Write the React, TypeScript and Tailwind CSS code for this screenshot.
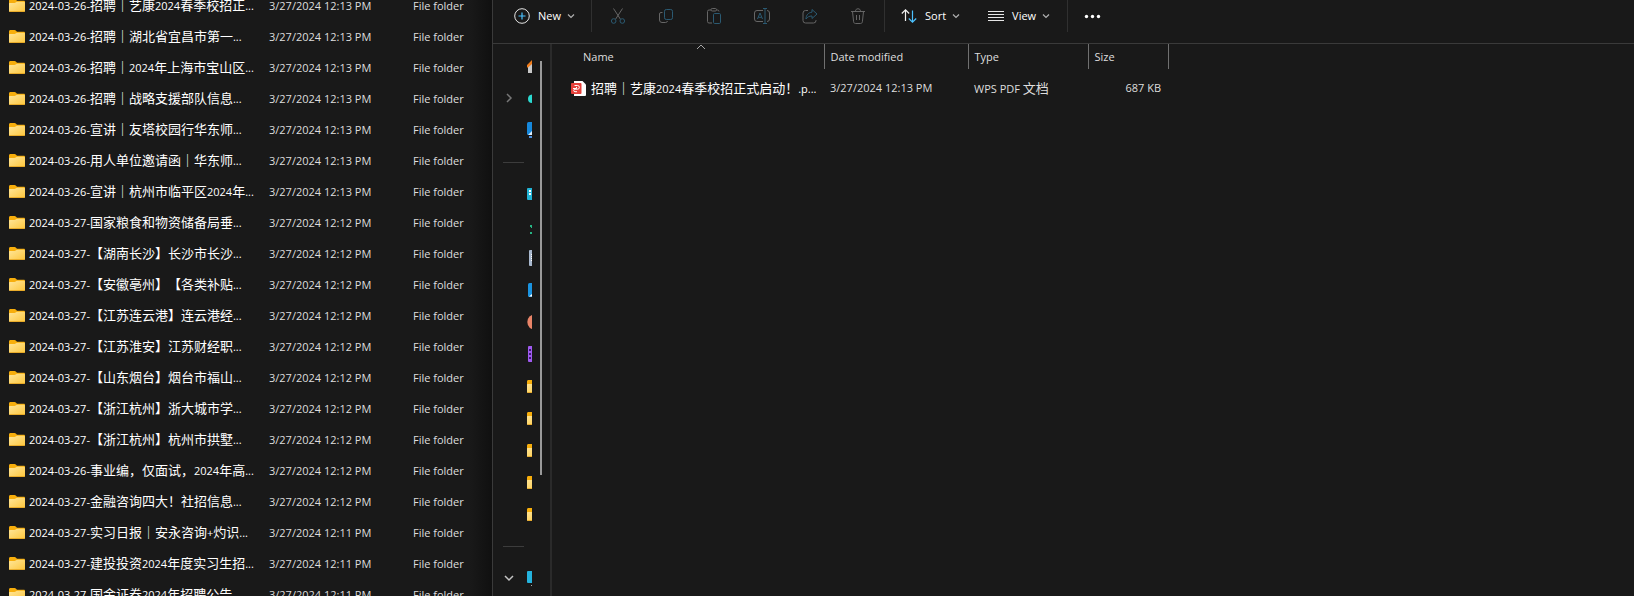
import React from 'react';

type Entry = { name: string; time: string };

const entries: Entry[] = [
  { name: '2024-03-26-招聘｜艺康2024春季校招正...', time: '12:13' },
  { name: '2024-03-26-招聘｜湖北省宜昌市第一...', time: '12:13' },
  { name: '2024-03-26-招聘｜2024年上海市宝山区...', time: '12:13' },
  { name: '2024-03-26-招聘｜战略支援部队信息...', time: '12:13' },
  { name: '2024-03-26-宣讲｜友塔校园行华东师...', time: '12:13' },
  { name: '2024-03-26-用人单位邀请函｜华东师...', time: '12:13' },
  { name: '2024-03-26-宣讲｜杭州市临平区2024年...', time: '12:13' },
  { name: '2024-03-27-国家粮食和物资储备局垂...', time: '12:12' },
  { name: '2024-03-27-【湖南长沙】长沙市长沙...', time: '12:12' },
  { name: '2024-03-27-【安徽亳州】【各类补贴...', time: '12:12' },
  { name: '2024-03-27-【江苏连云港】连云港经...', time: '12:12' },
  { name: '2024-03-27-【江苏淮安】江苏财经职...', time: '12:12' },
  { name: '2024-03-27-【山东烟台】烟台市福山...', time: '12:12' },
  { name: '2024-03-27-【浙江杭州】浙大城市学...', time: '12:12' },
  { name: '2024-03-27-【浙江杭州】杭州市拱墅...', time: '12:12' },
  { name: '2024-03-26-事业编，仅面试，2024年高...', time: '12:12' },
  { name: '2024-03-27-金融咨询四大！社招信息...', time: '12:12' },
  { name: '2024-03-27-实习日报｜安永咨询+灼识...', time: '12:11' },
  { name: '2024-03-27-建投投资2024年度实习生招...', time: '12:11' },
  { name: '2024-03-27-国金证券2024年招聘公告', time: '12:11' },
];

/* Chinese runs are set two pixels larger than the Latin text around them. */
function Mixed({ text }: { text: string }) {
  const runs = text.split(/([\u3000-\u9fff\uff00-\uffef]+)/).filter(Boolean);
  return (
    <>
      {runs.map((run, i) =>
        run.charCodeAt(0) >= 0x3000 ? (
          <span key={i} lang="zh-CN" className="text-[13px] [text-spacing-trim:space-all]">{run}</span>
        ) : (
          <span key={i}>{run}</span>
        ),
      )}
    </>
  );
}

function FolderIcon() {
  return (
    <svg width="16" height="13" viewBox="0 0 16 13" className="block shrink-0" aria-hidden="true">
      <defs>
        <linearGradient id="folderFace" x1="0" y1="0" x2="1" y2="1">
          <stop offset="0" stopColor="#ffe69a" />
          <stop offset="1" stopColor="#fdc63c" />
        </linearGradient>
      </defs>
      <path d="M0 1.5C0 .7.6 0 1.4 0h4.2c.5 0 .9.2 1.2.5L8 1.8h6.8c.7 0 1.2.5 1.2 1.2V8H0z" fill="#f7ae0c" />
      <path d="M0 4.6C0 4.2.3 4 .7 4h4.8c.5 0 .8-.1 1.2-.4l.8-.5c.3-.2.6-.3 1-.3h6.3c.7 0 1.2.5 1.2 1.1v8c0 .6-.5 1.1-1.2 1.1H1.2C.5 13 0 12.5 0 11.9z" fill="url(#folderFace)" />
      <path d="M.2 12.2h15.6c-.2.500-.6.8-1 .8H1.2c-.4 0-.8-.3-1-.8z" fill="#e2a01c" />
    </svg>
  );
}

function Chevron({ className = '' }: { className?: string }) {
  return (
    <svg width="8" height="8" viewBox="0 0 8 8" className={className} fill="none" stroke="currentColor" strokeWidth="1.2" aria-hidden="true">
      <path d="M1 2.5 4 5.5 7 2.5" />
    </svg>
  );
}

const grey = '#666666';
const teal = '#2b5a72';

const actions: { label: string; icon: React.ReactNode }[] = [
  {
    label: 'Cut',
    icon: (
      <>
        <path d="M3.5.5 10.3 11M12.5.5 5.7 11" stroke={grey} />
        <circle cx="3.7" cy="13" r="2.3" stroke={teal} />
        <circle cx="12.3" cy="13" r="2.3" stroke={teal} />
      </>
    ),
  },
  {
    label: 'Copy',
    icon: (
      <>
        <path d="M4.5 4.5H3A1.5 1.5 0 0 0 1.500 6v6A2.5 2.5 0 0 0 4 14.5h3.500A2 2 0 0 0 9.500 13" stroke={grey} />
        <rect x="6.5" y="1.5" width="8" height="10" rx="1.8" stroke={teal} />
      </>
    ),
  },
  {
    label: 'Paste',
    icon: (
      <>
        <path d="M5 2H3a1.5 1.5 0 0 0-1.5 1.5v10A1.5 1.5 0 0 0 3 15h3M10.5 2h1A1.5 1.5 0 0 1 13 3.5" stroke={grey} />
        <rect x="5" y=".5" width="5.5" height="2.5" rx="1.2" stroke={grey} />
        <rect x="7.5" y="5.5" width="7" height="10" rx="1.2" stroke={teal} />
      </>
    ),
  },
  {
    label: 'Rename',
    icon: (
      <>
        <path d="M9 2.5H3A2.5 2.5 0 0 0 .5 5v6A2.5 2.5 0 0 0 3 13.5h6M13 2.5A2.5 2.5 0 0 1 15.5 5v6a2.5 2.5 0 0 1-2.5 2.5" stroke={grey} />
        <path d="M3.5 11 6 5l2.5 6M4.3 9.3h3.4" stroke={teal} />
        <path d="M9 .5h4M9 15.5h4M11 .5v15" stroke={teal} />
      </>
    ),
  },
  {
    label: 'Share',
    icon: (
      <>
        <path d="M6 2.5H3.5A2.5 2.5 0 0 0 1 5v7.5A2.5 2.5 0 0 0 3.5 15h8a2.5 2.500 0 0 0 2.5-2.5V12" stroke={grey} />
        <path d="M10 1.5 15 6l-5 4.5V8C7 8 5.5 9 4 11c0-4 2.500-6.500 6-6.800z" stroke={teal} />
      </>
    ),
  },
  {
    label: 'Delete',
    icon: (
      <path d="M1 3.5h14M5.5 3.5C5.5 1.5 6.5.8 8 .8s2.5.7 2.5 2.7M2.5 3.5l1.1 10.2c.1 1 .8 1.8 1.9 1.8h5c1.1 0 1.800-.8 1.900-1.800L13.5 3.5M6.5 7v5M9.5 7v5" stroke={grey} />
    ),
  },
];

function Divider() {
  return <span className="h-8 w-px shrink-0 bg-[#303030]" />;
}

function Toolbar() {
  return (
    <div role="toolbar" className="flex shrink-0 items-center border-b border-[#3a3a3a] pb-[11px] text-white">
      <button type="button" className="flex h-8 w-[98px] shrink-0 items-center pl-[21px]">
        <svg width="16" height="16" viewBox="0 0 16 16" fill="none" aria-hidden="true">
          <circle cx="8" cy="8" r="7.3" stroke="#e6e6e6" />
          <path d="M8 4.5v7M4.5 8h7" stroke="#4cc2ff" strokeWidth="1.2" />
        </svg>
        <span className="ml-2">New</span>
        <Chevron className="ml-[6px] text-[#b0b0b0]" />
      </button>
      <Divider />
      <div className="flex h-8 items-center gap-8 px-[18px]">
        {actions.map((a) => (
          <button key={a.label} type="button" aria-label={a.label} disabled className="block">
            <svg width="16" height="16" viewBox="0 0 16 16" fill="none" aria-hidden="true">{a.icon}</svg>
          </button>
        ))}
      </div>
      <Divider />
      <button type="button" className="flex h-8 shrink-0 items-center pl-4">
        <svg width="16" height="16" viewBox="0 0 16 16" fill="none" strokeWidth="1.2" aria-hidden="true">
          <path d="M4.500 13V2M.8 5.500 4.500 1.800 8.200 5.500" stroke="#f0f0f0" />
          <path d="M11.500 2.500V14M7.800 10.500l3.700 3.700 3.700-3.700" stroke="#4cc2ff" />
        </svg>
        <span className="ml-2">Sort</span>
        <Chevron className="ml-[6px] text-[#b0b0b0]" />
      </button>
      <button type="button" className="ml-7 flex h-8 shrink-0 items-center">
        <svg width="16" height="16" viewBox="0 0 16 16" fill="none" aria-hidden="true">
          <path d="M0 3.5h16M0 6.5h16M0 9.5h16M0 12.5h16" stroke="#e6e6e6" />
        </svg>
        <span className="ml-2">View</span>
        <Chevron className="mr-[17px] ml-[6px] text-[#b0b0b0]" />
      </button>
      <Divider />
      <button type="button" aria-label="See more" className="ml-4 block shrink-0">
        <svg width="17" height="16" viewBox="0 0 17 16" fill="#ffffff" aria-hidden="true">
          <circle cx="2.5" cy="8.5" r="1.7" />
          <circle cx="8.5" cy="8.5" r="1.7" />
          <circle cx="14.5" cy="8.5" r="1.7" />
        </svg>
      </button>
    </div>
  );
}

const drawings: Record<string, React.ReactNode> = {
  home: (
    <>
      <path d="M1 7 8 1l7 6v8H1z" fill="#c9c9c9" />
      <path d="M0 7 7 0h2l7 7v2h-1L8 3.500 1 9.500H0z" fill="#f07c1b" />
    </>
  ),
  cloud: <path d="M1 9a4.5 4.5 0 0 1 4-4.5A6 6 0 0 1 15 7v6H5a4 4 0 0 1-4-4z" fill="#2bd9d0" />,
  gallery: (
    <>
      <rect x="0" y="0" width="16" height="13" rx="1.500" fill="#1688dc" />
      <path d="M1 13 6 8l6 5z" fill="#dff0ff" />
      <rect x="2" y="14" width="12" height="2" fill="#4a8fe0" />
    </>
  ),
  desktop: (
    <>
      <rect x="0" y="2" width="16" height="12" rx="1" fill="#22b4d6" />
      <path d="M2 4h2v2H2zM2 7h2v2H2z" fill="#fff" />
    </>
  ),
  downloads: <path d="M3 7h2v3H4V9H3zM3 14h10v2H3z" fill="#27b584" />,
  documents: (
    <>
      <rect x="2" y="0" width="12" height="16" rx="1" fill="#a8b8ce" />
      <path d="M4 4h7v1H4zM4 6h7v1H4zM4 8h7v1H4zM4 10h7v1H4z" fill="#fff" />
    </>
  ),
  pictures: (
    <>
      <rect x="1" y="1" width="14" height="14" rx="1.500" fill="#1a93e0" />
      <path d="M2 14.5 5.500 11.500l5.500 3z" fill="#fff" />
    </>
  ),
  music: <circle cx="8" cy="8" r="7.7" fill="#e98468" />,
  videos: (
    <>
      <rect x="1" y="0" width="14" height="16" rx="1" fill="#a05af0" />
      <path d="M2 3h2v2H2zM2 7h2v2H2zM2 11h2v2H2z" fill="#3d1c72" />
    </>
  ),
  pc: (
    <>
      <rect x="0" y="1" width="16" height="12" rx="1" fill="#24b3de" />
      <path d="M4 15h8v1H4z" fill="#aaa" />
    </>
  ),
};

const places = [
  'home', 'cloud', 'gallery', '-', 'desktop', 'downloads', 'documents', 'pictures', 'music', 'videos',
  'folder', 'folder', 'folder', 'folder', 'folder', '-', 'pc',
];

function Navigation() {
  return (
    <nav aria-label="Places" className="flex w-[59px] shrink-0 border-r-2 border-[#2a2a2a]">
      <ul className="w-[39px] overflow-hidden pt-[6px]">
        {places.map((place, i) => (
          <li key={i} className="flex h-8 items-center pl-[10px]">
            {place === '-' ? (
              <span className="h-px w-[21px] bg-[#3c3c3c]" />
            ) : (
              <>
                <span className="flex w-6 shrink-0 pl-px">
                  {place === 'cloud' && (
                    <svg width="10" height="10" viewBox="0 0 10 10" fill="none" stroke="#777" strokeWidth="1.5" aria-hidden="true">
                      <path d="M3 1l4 4-4 4" />
                    </svg>
                  )}
                  {place === 'pc' && (
                    <svg width="10" height="10" viewBox="0 0 10 10" fill="none" stroke="#c4c4c4" strokeWidth="1.500" aria-hidden="true">
                      <path d="M1 3l4 4 4-4" />
                    </svg>
                  )}
                </span>
                {place === 'folder' ? (
                  <FolderIcon />
                ) : (
                  <svg width="16" height="16" viewBox="0 0 16 16" className="shrink-0" aria-hidden="true">{drawings[place]}</svg>
                )}
              </>
            )}
          </li>
        ))}
      </ul>
      <div className="pt-[17px] pl-2">
        <div className="h-[414px] w-[2px] bg-[#9a9a9a]" />
      </div>
    </nav>
  );
}

function FolderList() {
  return (
    <section className="flex w-[492px] shrink-0 overflow-hidden">
      <table className="-mt-[10px] h-fit w-[470px] table-fixed border-collapse whitespace-nowrap">
        <colgroup>
          <col className="w-[269px]" />
          <col className="w-36" />
          <col />
        </colgroup>
        <tbody>
          {entries.map((e) => (
            <tr key={e.name} className="h-[31px]">
              <td className="p-0 pl-[9px] text-white">
                <div className="flex items-center gap-1">
                  <FolderIcon />
                  <span className="leading-[18px]"><Mixed text={e.name} /></span>
                </div>
              </td>
              <td className="p-0">3/27/2024 {e.time} PM</td>
              <td className="p-0">File folder</td>
            </tr>
          ))}
        </tbody>
      </table>
      <div className="flex-1 bg-linear-to-r from-[#191919] to-[#101010]" />
    </section>
  );
}

function PdfIcon() {
  return (
    <svg width="15" height="15" viewBox="0 0 15 15" className="shrink-0" aria-hidden="true">
      <path d="M3 0h8.5L15 3.5V14a1 1 0 0 1-1 1H3z" fill="#fff" />
      <rect x="0" y="2" width="10.5" height="11" rx="1" fill="#e5403a" />
      <path d="M2 7.500h3.500V6M3.500 4.500h3a1.700 1.700 0 0 1 0 3.700H4a1.200 1.200 0 0 0 0 2.500h2" fill="none" stroke="#fff" />
    </svg>
  );
}

function FileTable() {
  const head = 'h-[25px] border-r border-[#707070] p-0 pl-[6px] text-left font-normal';
  return (
    <div className="min-w-0 flex-1">
      <table className="w-[616px] table-fixed border-collapse whitespace-nowrap">
        <colgroup>
          <col className="w-[272px]" />
          <col className="w-36" />
          <col className="w-[120px]" />
          <col className="w-20" />
        </colgroup>
        <thead>
          <tr>
            <th className="relative h-[25px] border-r border-[#707070] p-0 pl-[31px] text-left font-normal">
              Name
              <svg width="10" height="6" viewBox="0 0 10 6" className="absolute top-0 left-[144px]" fill="none" stroke="#a8a8a8" aria-hidden="true">
                <path d="M1 5l4-4 4 4" />
              </svg>
            </th>
            <th className={head}>Date modified</th>
            <th className={head}>Type</th>
            <th className={head}>Size</th>
          </tr>
        </thead>
        <tbody>
          <tr className="h-[38px]">
            <td className="p-0 pl-[19px] text-white">
              <div className="flex items-center gap-[5px]">
                <PdfIcon />
                <span className="leading-[18px]"><Mixed text="招聘｜艺康2024春季校招正式启动！.p..." /></span>
              </div>
            </td>
            <td className="p-0 pl-[6px]">3/27/2024 12:13 PM</td>
            <td className="p-0 pl-[6px]"><Mixed text="WPS PDF 文档" /></td>
            <td className="p-0 pr-[7px] text-right">687 KB</td>
          </tr>
        </tbody>
      </table>
    </div>
  );
}

export default function App() {
  return (
    <main className="flex h-screen overflow-hidden bg-[#191919] font-['Open_Sans','Noto_Sans_CJK_SC',sans-serif] text-[11px] leading-4 text-[#dedede]">
      <FolderList />
      <section className="flex min-w-0 flex-1 flex-col border-l border-[#3a3a3a]">
        <Toolbar />
        <div className="flex min-h-0 flex-1">
          <Navigation />
          <FileTable />
        </div>
      </section>
    </main>
  );
}
